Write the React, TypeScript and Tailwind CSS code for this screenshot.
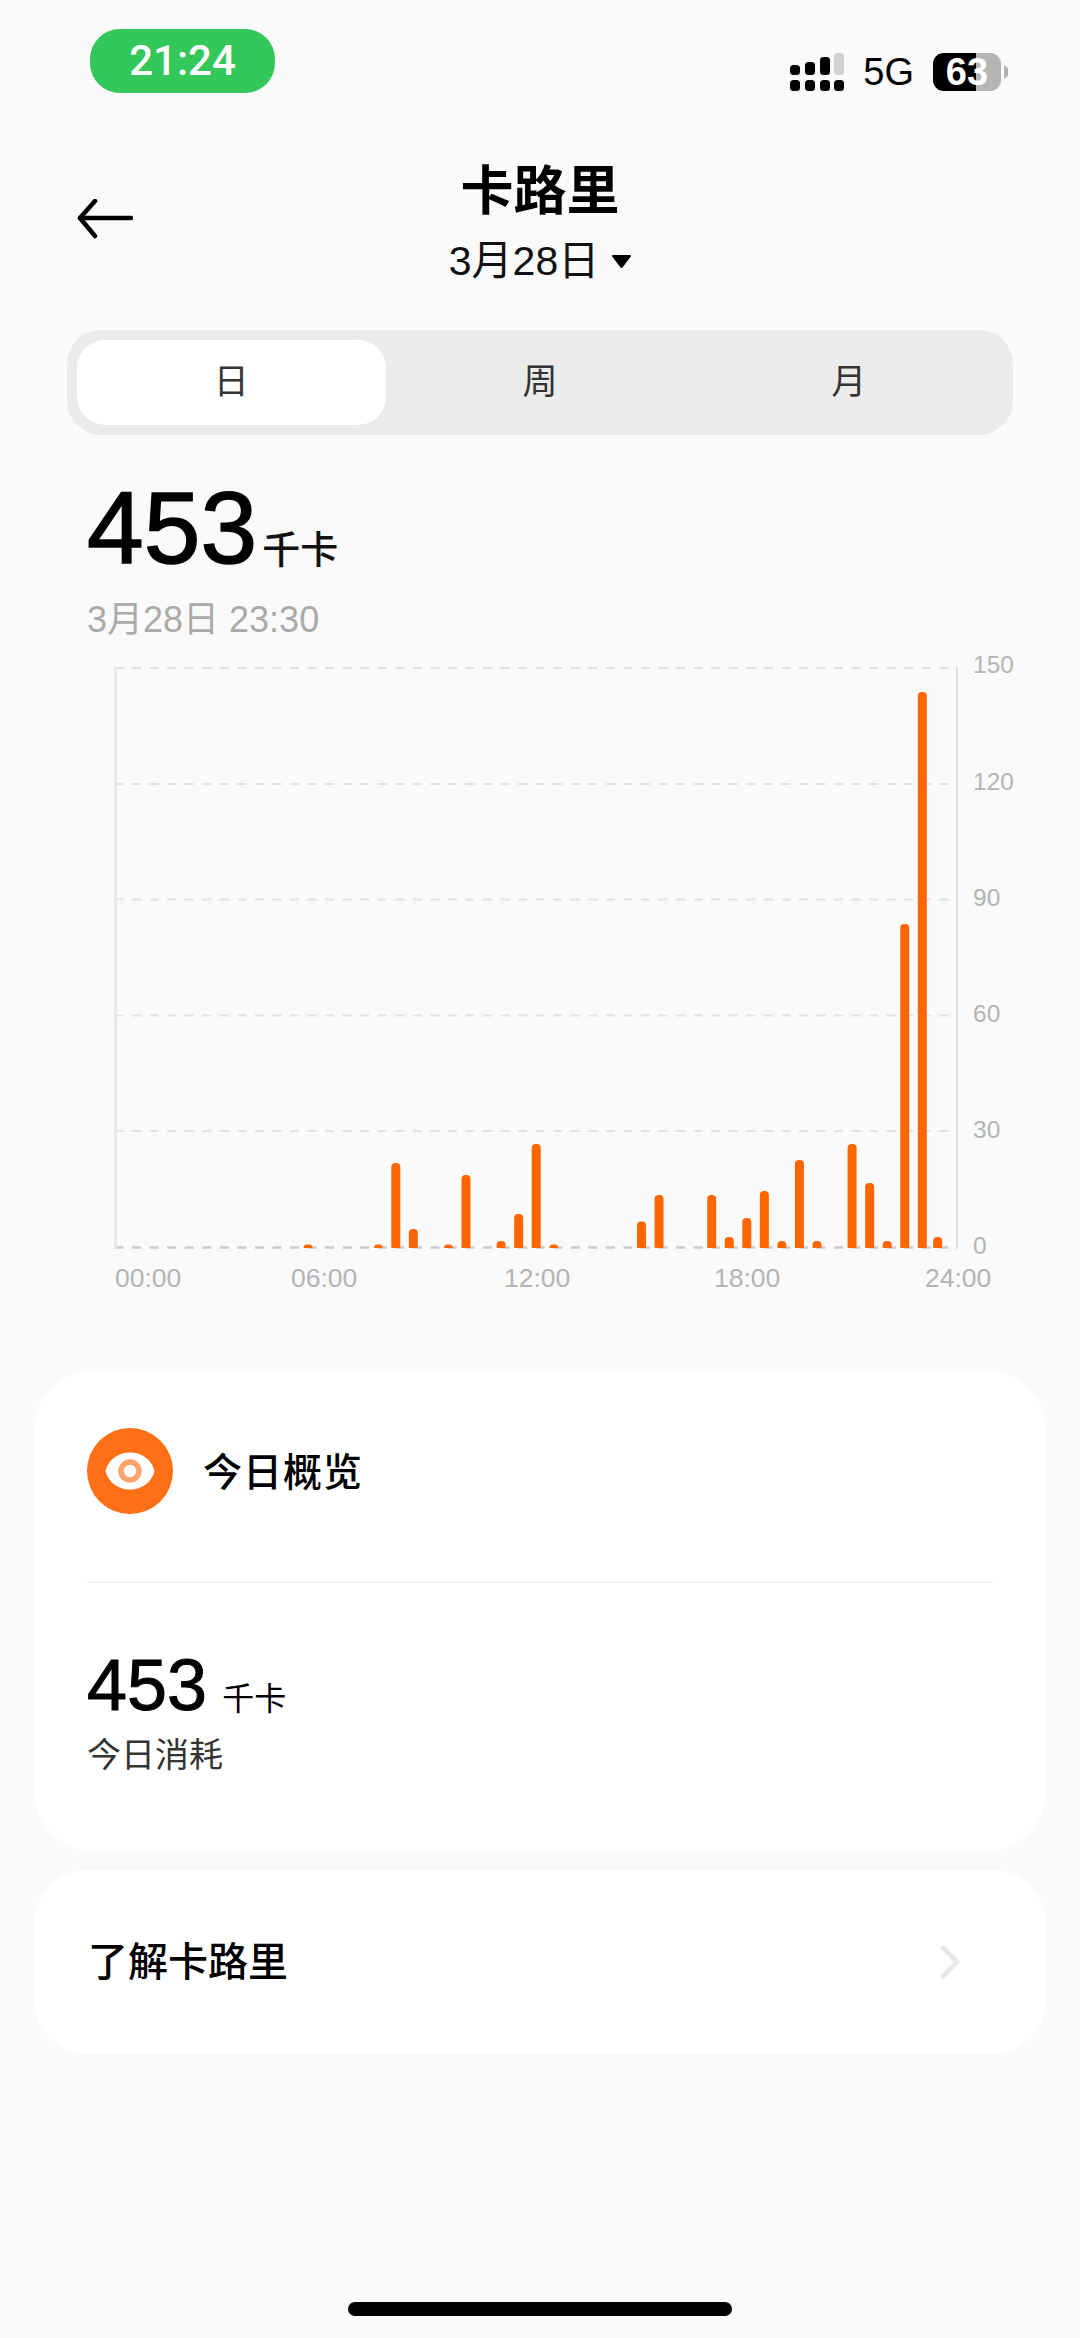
const slots = [
  [11, 3.5], [15, 3.5], [16, 85], [17, 19], [19, 3.5], [20, 73], [22, 7], [23, 34], [24, 104], [25, 3.5],
  [30, 26.5], [31, 53], [34, 53], [35, 11], [36, 30], [37, 57], [38, 7], [39, 88], [40, 7],
  [42, 104], [43, 65], [44, 7], [45, 324], [46, 556], [47, 11],
];

const gridLines = [668, 784, 899.6, 1015.4, 1131];

const yLabels = [
  { text: "150", y: 673 },
  { text: "120", y: 790 },
  { text: "90", y: 906 },
  { text: "60", y: 1022 },
  { text: "30", y: 1138 },
  { text: "0", y: 1254 },
];

const xLabels = [
  { text: "00:00", x: 115 },
  { text: "06:00", x: 291 },
  { text: "12:00", x: 504 },
  { text: "18:00", x: 714 },
  { text: "24:00", x: 925 },
];

function barPath(cx: number, h: number) {
  const base = 1248;
  const left = cx - 4.5;
  const right = cx + 4.5;
  const top = base - h;
  const r = Math.min(4, h);
  return `M${left} ${base}V${top + r}Q${left} ${top} ${left + r} ${top}H${right - r}Q${right} ${top} ${right} ${top + r}V${base}Z`;
}

function StatusBar() {
  return (
    <div className="flex justify-between items-start mt-[29px] pl-[90px] pr-[72px]">
      <div className="w-[185px] h-[64px] rounded-[30px] bg-[#34c759] flex items-center justify-center text-white text-[42px] leading-none font-medium font-['Roboto',sans-serif]">
        21:24
      </div>
      <div className="flex items-center mt-[24px] h-[38px]">
        <svg width="56" height="38" viewBox="0 0 56 38" fill="#000">
          <rect x="0" y="12" width="10" height="10" rx="3.5" />
          <rect x="15" y="9" width="10" height="13" rx="3.5" />
          <rect x="30" y="4" width="10" height="18" rx="3.5" />
          <rect x="44" y="0" width="10" height="22" rx="3.5" fill="#d2d2d2" />
          <rect x="0" y="27" width="10" height="11" rx="3.5" />
          <rect x="15" y="27" width="10" height="11" rx="3.5" />
          <rect x="30" y="27" width="10" height="11" rx="3.5" />
          <rect x="44" y="27" width="10" height="11" rx="3.5" />
        </svg>
        <span className="ml-[17px] text-[38px] leading-none text-black">5G</span>
        <div className="relative ml-[19px] w-[68px] h-[38px] rounded-[11px] bg-[#b5b5b5] flex items-center justify-center">
          <div className="absolute left-0 top-0 bottom-0 w-[43px] rounded-l-[11px] bg-black" />
          <span className="relative text-white font-bold text-[38px] leading-none">63</span>
        </div>
        <div className="ml-[3px] w-[4px] h-[12px] rounded-r-full bg-[#b5b5b5]" />
      </div>
    </div>
  );
}

function Header() {
  return (
    <div className="grid grid-cols-[1fr_auto_1fr] mt-[67px] h-[126px]">
      <div className="pl-[77px] pt-[39px]">
        <svg width="56" height="40" viewBox="0 0 56 40" fill="none" stroke="#000" strokeWidth="4.5" strokeLinecap="round" strokeLinejoin="round">
          <path d="M54 19H3" />
          <path d="M18 2L3 19l15 18" />
        </svg>
      </div>
      <div className="flex flex-col items-center">
        <div className="h-[64px] text-[53px] leading-[64px] font-semibold text-black">卡路里</div>
        <div className="mt-[12px] h-[50px] flex items-center text-[41px] leading-[50px] text-[#111]">
          3月28日
          <svg className="ml-[13px]" width="19" height="13" viewBox="0 0 19 13" fill="#000">
            <path d="M1 0h17a1 1 0 0 1 .8 1.6l-8.3 10.8a1.3 1.3 0 0 1-2 0L.2 1.6A1 1 0 0 1 1 0Z" />
          </svg>
        </div>
      </div>
      <div />
    </div>
  );
}

function PeriodTabs() {
  return (
    <div className="grid grid-cols-3 mt-[44px] mx-[67px] h-[105px] rounded-[34px] bg-[#ebebeb] p-[10px] text-[35px] text-[#333]">
      <div className="rounded-[28px] bg-white flex items-center justify-center">日</div>
      <div className="flex items-center justify-center">周</div>
      <div className="flex items-center justify-center">月</div>
    </div>
  );
}

function Chart() {
  return (
    <svg className="block" width="1080" height="660" viewBox="0 640 1080 660">
      {gridLines.map((y) => (
        <line key={y} x1="114.5" x2="955" y1={y} y2={y} stroke="#e2e2e2" strokeWidth="2" strokeDasharray="9 8.55" />
      ))}
      <line x1="114.5" x2="955" y1="1247.5" y2="1247.5" stroke="#cbcbcb" strokeWidth="2.5" strokeDasharray="9 8.55" />
      <line x1="115.5" x2="115.5" y1="667" y2="1249" stroke="#e8e8e8" strokeWidth="3" />
      <line x1="957" x2="957" y1="667" y2="1249" stroke="#d6d6d6" strokeWidth="1.5" />
      {slots.map(([i, h]) => (
        <path key={i} d={barPath(i === 47 ? 937.7 : 115 + 17.55 * i, h)} fill="#ff6600" />
      ))}
      <g fill="#b4b4b4" fontFamily="Liberation Sans, sans-serif">
        {yLabels.map((l) => (
          <text key={l.text} x="973" y={l.y} fontSize="24.5">
            {l.text}
          </text>
        ))}
        {xLabels.map((l) => (
          <text key={l.text} x={l.x} y="1287" fontSize="26.5">
            {l.text}
          </text>
        ))}
      </g>
    </svg>
  );
}

function EyeBadge() {
  return (
    <div className="w-[86px] h-[86px] rounded-full bg-[#ff7016] flex items-center justify-center">
      <svg width="50" height="38" viewBox="0 0 50 38">
        <path d="M0.5 19C3 8 13 0.5 25 0.5S47 8 49.5 19C47 30 37 37.5 25 37.5S3 30 0.5 19Z" fill="#fff" />
        <circle cx="25" cy="19" r="9" fill="#fff" stroke="#ffa26b" strokeWidth="5.5" />
      </svg>
    </div>
  );
}

function SummaryCard() {
  return (
    <div className="mt-[71px] mx-[34px] h-[480px] rounded-[60px] bg-white px-[53px] pt-[57px]">
      <div className="flex items-center gap-[30px]">
        <EyeBadge />
        <span className="mt-[4px] text-[39px] font-medium text-black tracking-[1px]">今日概览</span>
      </div>
      <div className="mt-[67px] h-[2px] bg-[#f1f1f1]" />
      <div className="mt-[66px] flex items-baseline h-[72px] leading-[72px]">
        <span className="text-[72px] text-black [-webkit-text-stroke:1px_#000]">453</span>
        <span className="ml-[15px] text-[32px] text-black">千卡</span>
      </div>
      <div className="mt-[12px] h-[44px] leading-[44px] text-[34px] text-[#333]">今日消耗</div>
    </div>
  );
}

function LearnCard() {
  return (
    <div className="mt-[19px] mx-[34px] h-[184px] rounded-[54px] bg-white pl-[54px] pr-[86px] flex items-center justify-between">
      <span className="text-[40px] font-medium text-black">了解卡路里</span>
      <svg width="20" height="34" viewBox="0 0 20 34" fill="none" stroke="#e8e8e8" strokeWidth="5" strokeLinecap="round" strokeLinejoin="round">
        <path d="M3 3l14 14L3 31" />
      </svg>
    </div>
  );
}

export default function App() {
  return (
    <div className="w-[1080px] h-[2338px] bg-[#fafafa] flex flex-col overflow-hidden font-['Liberation_Sans','Noto_Sans_CJK_SC',sans-serif]">
      <StatusBar />
      <Header />
      <PeriodTabs />
      <div className="mt-[42px] ml-[87px] flex items-baseline h-[102px] leading-[102px]">
        <span className="text-[102px] text-black [-webkit-text-stroke:1.5px_#000]">453</span>
        <span className="ml-[5px] text-[38px] font-medium text-[#111]">千卡</span>
      </div>
      <div className="mt-[21px] ml-[87px] h-[40px] leading-[40px] text-[36px] text-[#aaa]">3月28日 23:30</div>
      <Chart />
      <SummaryCard />
      <LearnCard />
      <div className="mt-[248px] mx-auto w-[384px] h-[14px] rounded-full bg-black" />
    </div>
  );
}
